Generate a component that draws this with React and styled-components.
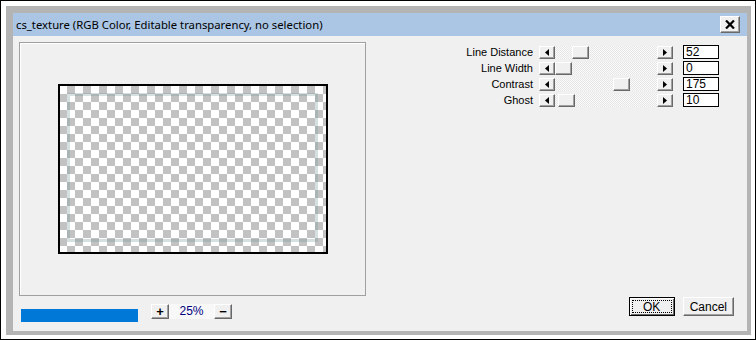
import styled, { createGlobalStyle } from "styled-components";

const GlobalStyle = createGlobalStyle`
  html, body {
    margin: 0;
    padding: 0;
    background: #ffffff;
  }
  * {
    box-sizing: border-box;
  }
`;

const params = [
  { label: "Line Distance", value: 52 },
  { label: "Line Width", value: 0 },
  { label: "Contrast", value: 175 },
  { label: "Ghost", value: 10 },
];

const TRACK = 102;
const THUMB = 17;

const Arrow = ({ dir }) => (
  <svg width="4" height="7" viewBox="0 0 4 7">
    {dir === "left" ? (
      <polygon points="4,0 4,7 0,3.5" fill="#000" />
    ) : (
      <polygon points="0,0 0,7 4,3.5" fill="#000" />
    )}
  </svg>
);

const ScrollBar = ({ value }) => {
  const left = Math.round((value / 255) * (TRACK - THUMB));
  return (
    <Scroll>
      <ArrowButton>
        <Arrow dir="left" />
      </ArrowButton>
      <Track>
        <Thumb style={{ left }} />
      </Track>
      <ArrowButton>
        <Arrow dir="right" />
      </ArrowButton>
    </Scroll>
  );
};

const App = () => {
  return (
    <>
      <GlobalStyle />
      <Window>
        <Frame>
          <TitleBar>
            <Title>cs_texture (RGB Color, Editable transparency, no selection)</Title>
            <CloseButton>
              <svg width="10" height="9" viewBox="0 0 10 9">
                <path d="M1 0.5 L9 8.5 M9 0.5 L1 8.5" stroke="#000" strokeWidth="2.2" />
              </svg>
            </CloseButton>
          </TitleBar>
          <Content>
            <LeftColumn>
              <Preview>
                <Canvas>
                  <Ghost />
                </Canvas>
              </Preview>
              <ZoomBar>
                <Progress />
                <SmallButton $gap={13}>+</SmallButton>
                <ZoomLabel>25%</ZoomLabel>
                <SmallButton $gap={0}>−</SmallButton>
              </ZoomBar>
            </LeftColumn>
            <RightColumn>
              <Params>
                {params.map((p) => (
                  <Row key={p.label}>
                    <Label>{p.label}</Label>
                    <ScrollBar value={p.value} />
                    <ValueBox>{p.value}</ValueBox>
                  </Row>
                ))}
              </Params>
              <Buttons>
                <DialogButton $default>
                  <Focus>OK</Focus>
                </DialogButton>
                <DialogButton>Cancel</DialogButton>
              </Buttons>
            </RightColumn>
          </Content>
        </Frame>
      </Window>
    </>
  );
};

const Window = styled.div`
  width: 756px;
  height: 340px;
  border: 1px solid #000;
  background: #fff;
  padding: 5px 4px 4px 5px;
`;

const Frame = styled.div`
  height: 100%;
  display: flex;
  flex-direction: column;
  border-style: solid;
  border-color: #b4b4b4;
  border-width: 7px 4px 4px 7px;
  background: #f0f0f0;
`;

const TitleBar = styled.div`
  height: 23px;
  flex: none;
  display: flex;
  align-items: center;
  justify-content: space-between;
  padding: 0 7px 0 3px;
  background: #abc6e4;
`;

const Title = styled.div`
  font-family: "Noto Sans", "DejaVu Sans", sans-serif;
  font-size: 11.3px;
  color: #000;
`;

const raised = `
  border-style: solid;
  border-width: 1px;
  border-color: #ffffff #696969 #696969 #ffffff;
  box-shadow: inset -1px -1px 0 #a0a0a0;
  background: #f0f0f0;
`;

const CloseButton = styled.div`
  width: 20px;
  height: 17px;
  display: flex;
  align-items: center;
  justify-content: center;
  ${raised}
`;

const Content = styled.div`
  flex: 1;
  min-height: 0;
  display: flex;
  padding: 6px 13px 15px 6px;
`;

const LeftColumn = styled.div`
  width: 347px;
  display: flex;
  flex-direction: column;
`;

const Preview = styled.div`
  width: 347px;
  height: 254px;
  flex: none;
  border: 1px solid #a0a0a0;
  box-shadow: inset 1px 1px 0 #fff;
  display: flex;
  align-items: center;
  justify-content: center;
`;

const Canvas = styled.div`
  position: relative;
  width: 270px;
  height: 170px;
  border: 2px solid #000;
  background: repeating-conic-gradient(#c2c2c2 0 25%, #ffffff 0 50%) -1px 0 / 16px 16px;
`;

const Ghost = styled.div`
  position: absolute;
  left: 7px;
  top: 7px;
  width: 251px;
  height: 149px;
  border: 3px solid rgba(110, 145, 145, 0.28);
`;

const ZoomBar = styled.div`
  display: flex;
  align-items: flex-start;
  margin-top: 8px;
`;

const Progress = styled.div`
  width: 117px;
  height: 13px;
  margin: 5px 0 0 2px;
  background: #0078d7;
`;

const SmallButton = styled.div`
  width: 18px;
  height: 15px;
  margin-left: ${(p) => p.$gap}px;
  display: flex;
  align-items: center;
  justify-content: center;
  font-family: "Liberation Sans", Arial, sans-serif;
  font-size: 13px;
  font-weight: bold;
  line-height: 1;
  color: #000;
  ${raised}
`;

const ZoomLabel = styled.div`
  width: 45px;
  height: 15px;
  line-height: 15px;
  text-align: center;
  font-family: "Liberation Sans", Arial, sans-serif;
  font-size: 12px;
  color: #000080;
  background: #f8f8f8;
`;

const RightColumn = styled.div`
  flex: 1;
  display: flex;
  flex-direction: column;
  align-items: flex-end;
  padding-top: 2px;
`;

const Params = styled.div`
  display: flex;
  flex-direction: column;
  margin-right: 15px;
`;

const Row = styled.div`
  height: 16px;
  display: flex;
  align-items: center;
  justify-content: flex-end;
`;

const Label = styled.div`
  font-family: "Liberation Sans", Arial, sans-serif;
  font-size: 11px;
  color: #000;
  margin-right: 6px;
`;

const Scroll = styled.div`
  width: 134px;
  height: 13px;
  display: flex;
`;

const ArrowButton = styled.div`
  width: 16px;
  height: 13px;
  display: flex;
  align-items: center;
  justify-content: center;
  ${raised}
`;

const Track = styled.div`
  position: relative;
  flex: 1;
  background: repeating-conic-gradient(#e6e6e6 0 25%, #fafafa 0 50%) 0 0 / 2px 2px;
`;

const Thumb = styled.div`
  position: absolute;
  top: 0;
  width: ${THUMB}px;
  height: 13px;
  ${raised}
`;

const ValueBox = styled.div`
  width: 36px;
  height: 14px;
  margin-left: 10px;
  padding-left: 2px;
  border: 1px solid #000;
  background: #fff;
  font-family: "Liberation Sans", Arial, sans-serif;
  font-size: 12px;
  line-height: 12px;
  color: #000;
`;

const Buttons = styled.div`
  margin-top: auto;
  display: flex;
  gap: 8px;
`;

const DialogButton = styled.div`
  height: 19px;
  min-width: ${(p) => (p.$default ? "46px" : "51px")};
  padding: ${(p) => (p.$default ? "2px" : "0 6px")};
  display: flex;
  align-items: center;
  justify-content: center;
  font-family: "Liberation Sans", Arial, sans-serif;
  font-size: 12px;
  color: #000;
  background: #f0f0f0;
  border: 1px solid ${(p) => (p.$default ? "#000" : "#696969")};
  border-top-color: ${(p) => (p.$default ? "#000" : "#fff")};
  border-left-color: ${(p) => (p.$default ? "#000" : "#fff")};
  box-shadow: ${(p) =>
    p.$default
      ? "inset 1px 1px 0 #fff, inset -1px -1px 0 #696969"
      : "inset -1px -1px 0 #a0a0a0"};
`;

const Focus = styled.div`
  width: 100%;
  height: 100%;
  display: flex;
  align-items: center;
  justify-content: center;
  border: 1px dotted #000;
`;

export default App;
